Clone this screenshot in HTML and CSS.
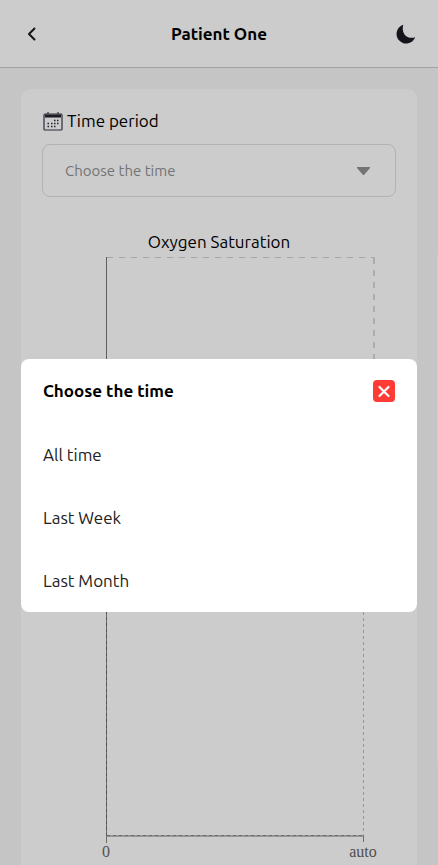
FILE: index.html
```html
<!DOCTYPE html>
<html lang="en">
<head>
<meta charset="utf-8">
<meta name="viewport" content="width=device-width, initial-scale=1">
<title>Patient One</title>
<link rel="stylesheet" href="styles.css">
</head>
<body>
<header class="topbar">
  <button class="icon-button" type="button" aria-label="Back">
    <svg width="22" height="22" viewBox="0 0 22 22" fill="none" stroke="#191a23" stroke-width="2"><path d="M13.500 5.500 8 11l5.500 5.500" stroke-linecap="round" stroke-linejoin="round"/></svg>
  </button>
  <h1 class="title">Patient One</h1>
  <button class="icon-button" type="button" aria-label="Dark mode">
    <svg width="22" height="22" viewBox="0 0 22 22" fill="#191a23"><path d="M8.300 1.800A9.600 9.600 0 1 0 20.200 14.200Q16.500 15.400 13 14.200C8.500 12.500 6.800 7 8.300 1.800Z"/></svg>
  </button>
</header>
<main class="card">
  <label class="field-label" for="period">
    <svg width="20" height="20" viewBox="0 0 20 20"><rect x="1" y="3" width="18" height="16" rx="1" fill="none" stroke="#3a3a48" stroke-width="1.200"/><path d="M2 3.500h16v3H2zM4 1.500h2v1H4zM14 1.500h2v1h-2z" fill="#22222c"/><path d="M11 9.500h1.500M14 9.500h1.500M4.500 12.500H6M8 12.500h1.500M11 12.500h1.500M14 12.500h1.500M4.500 15.500H6M8 15.500h1.500M11 15.500h1.500" stroke="#2a2a38" stroke-width="1.500"/></svg>
    Time period
  </label>
  <div class="select-wrap">
    <select class="select" id="period">
      <option>Choose the time</option>
      <option>All time</option>
      <option>Last Week</option>
      <option>Last Month</option>
    </select>
    <svg class="caret" width="13" height="8" viewBox="0 0 13 8" fill="#929292"><path d="M0 0h13v1L7 8H6L0 1z"/></svg>
  </div>
  <h2 class="chart-title">Oxygen Saturation</h2>
  <svg class="chart" width="352" height="280" viewBox="0 0 352 280" fill="none">
    <path d="M64 3.500H331.500" stroke="#d0d0d0" stroke-dasharray="6 6"/>
    <path d="M331 4V240" stroke="#d8d8d8" stroke-dasharray="6 6" stroke-width="2"/>
    <path d="M63.500 3V240" stroke="#777"/>
  </svg>
  <svg class="chart" width="352" height="330" viewBox="0 0 352 330" fill="none">
    <path d="M63.500 5V309M63 301.500H320.500V308" stroke="#888"/>
    <path d="M63.500 5V301.500H320.500V5" stroke="#bbb" stroke-dasharray="3 3"/>
    <path d="M63.500 5V301.500" stroke="#666" stroke-dasharray="3 3"/>
    <path d="M64 302.500H320" stroke="#bbb"/>
    <g class="ticks"><text x="63" y="323">0</text><text x="320" y="323">auto</text></g>
  </svg>
</main>
<div class="scroll-track"></div>
<div class="overlay">
  <section class="dialog" role="dialog" aria-modal="true" aria-labelledby="dialog-title">
    <div class="dialog-head">
      <h2 class="dialog-title" id="dialog-title">Choose the time</h2>
      <button class="icon-button" type="button" aria-label="Close">
        <svg width="22" height="22" viewBox="0 0 22 22"><rect width="22" height="22" rx="4" fill="#ff3b35"/><path d="m6.500 7 9 9m0-9-9 9" stroke="#fff" stroke-width="2.200" stroke-linecap="round"/></svg>
      </button>
    </div>
    <button class="choice" type="button">All time</button>
    <button class="choice" type="button">Last Week</button>
    <button class="choice" type="button">Last Month</button>
  </section>
</div>
</body>
</html>
```
FILE: styles.css
```css
* { box-sizing: border-box; }

body {
  margin: 0;
  height: 100vh;
  overflow: hidden;
  background: #f7f7f7;
  color: #000;
  font-family: Ubuntu, "Noto Sans", sans-serif;
  font-size: 17px;
  line-height: 24px;
}

button, select { font: inherit; }

.topbar {
  display: flex;
  align-items: center;
  justify-content: space-between;
  height: 68px;
  padding: 0 21px;
  background: #fff;
  border-bottom: 1px solid #ccc;
}

.title, .dialog-title, .chart-title {
  margin: 0;
  font-size: 17px;
}

.icon-button {
  display: flex;
  padding: 0;
  border: 0;
  background: none;
}

.card {
  margin: 21px;
  padding: 20px 21px;
  border-radius: 10px;
  background: #fff;
}

.field-label {
  display: flex;
  align-items: center;
  gap: 4px;
  margin-bottom: 11px;
}

.field-label svg {
  margin-left: 1px;
}

.select-wrap {
  display: grid;
  align-items: center;
}

.select {
  grid-area: 1 / 1;
  width: 100%;
  height: 53px;
  padding: 0 22px;
  border: 1px solid #e0e0e0;
  border-radius: 8px;
  background: transparent;
  color: #929292;
  font-size: 15px;
  appearance: none;
}

.caret {
  grid-area: 1 / 1;
  justify-self: end;
  margin-right: 26px;
  pointer-events: none;
}

.chart-title {
  margin-top: 33px;
  font-weight: 400;
  text-align: center;
}

.chart {
  display: block;
  margin: 0 auto;
}

.ticks {
  fill: #666;
  font-family: "Liberation Serif", serif;
  font-size: 16px;
  text-anchor: middle;
}

.scroll-track {
  position: fixed;
  top: 255px;
  right: 0;
  bottom: 102px;
  width: 1px;
  background: #fff;
}

.overlay {
  position: fixed;
  inset: 0;
  padding: 359px 21px 0;
  background: rgba(0, 0, 0, .2);
}

.dialog {
  padding: 0 22px;
  border-radius: 8px;
  background: #fff;
}

.dialog-head {
  display: flex;
  align-items: center;
  justify-content: space-between;
  height: 64px;
}

.choice {
  display: block;
  width: 100%;
  height: 63px;
  padding: 0;
  border: 0;
  background: none;
  color: #222;
  text-align: left;
}
```
